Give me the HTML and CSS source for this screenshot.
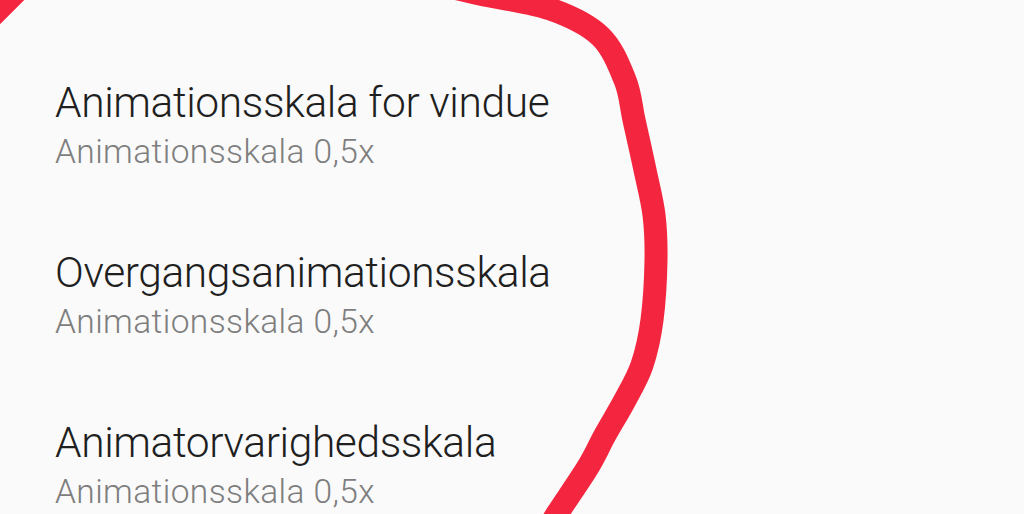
FILE: index.html
```html
<!DOCTYPE html>
<html lang="da">
<head>
<meta charset="utf-8">
<title>Animationsskala</title>
<link rel="stylesheet" href="styles.css">
</head>
<body>
<main class="list">
  <div class="row">
    <div class="title">Animationsskala for vindue</div>
    <div class="summary">Animationsskala 0,5x</div>
  </div>
  <div class="row">
    <div class="title">Overgangsanimationsskala</div>
    <div class="summary">Animationsskala 0,5x</div>
  </div>
  <div class="row">
    <div class="title">Animatorvarighedsskala</div>
    <div class="summary">Animationsskala 0,5x</div>
  </div>
</main>
<svg class="scribble" width="1024" height="514" viewBox="0 0 1024 514" aria-hidden="true">
  <path d="M-12,20 L20,-12" />
  <path d="M420,-20 C430,-17.7 458.3,-10.8 480,-6 C501.7,-1.2 530,2 550,9 C570,16 587.5,24.2 600,36 C612.5,47.8 619.3,66 625,80 C630.7,94 630.7,105 634,120 C637.3,135 641.7,154.2 645,170 C648.3,185.8 652.2,200 654,215 C655.8,230 656.3,242.5 656,260 C655.7,277.5 654.3,302.5 652,320 C649.7,337.5 646.5,351.7 642,365 C637.5,378.3 631.2,388.3 625,400 C618.8,411.7 611.2,423.8 605,435 C598.8,446.2 596,453.8 588,467 C580,480.2 564.2,502.7 557,514 C549.8,525.3 547,531.5 545,535" />
</svg>
</body>
</html>
```
FILE: styles.css
```css
html, body {
  margin: 0;
  padding: 0;
}
body {
  width: 1024px;
  height: 514px;
  overflow: hidden;
  background: #fafafa;
  font-family: Roboto, "Liberation Sans", sans-serif;
  position: relative;
}
.list {
  display: flex;
  flex-direction: column;
  padding: 40px 0 0 55px;
}
.row {
  display: flex;
  flex-direction: column;
  gap: 4px;
  padding: 38px 0;
}
.row:last-child {
  padding-bottom: 0;
}
.title {
  font-size: 42.5px;
  font-weight: 300;
  line-height: 50px;
  letter-spacing: -0.4px;
  color: #1f1f1f;
  white-space: nowrap;
}
.summary {
  font-size: 33.5px;
  font-weight: 300;
  line-height: 40px;
  letter-spacing: 0.4px;
  color: #7e7e7e;
  white-space: nowrap;
}
.scribble {
  position: absolute;
  top: 0;
  left: 0;
  pointer-events: none;
}
.scribble path {
  fill: none;
  stroke: #f4263f;
  stroke-width: 23;
  stroke-linecap: round;
  stroke-linejoin: round;
}
```
